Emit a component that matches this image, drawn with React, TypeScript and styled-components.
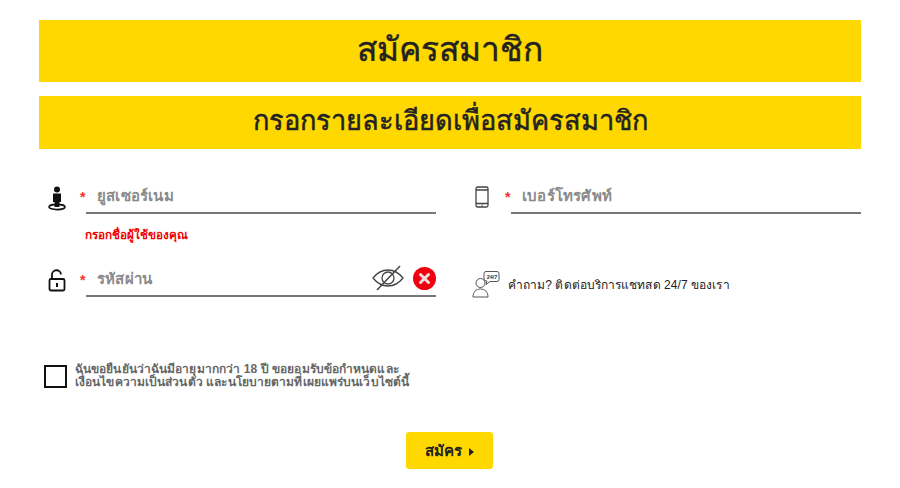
import React from "react";
import styled, { createGlobalStyle } from "styled-components";

const GlobalStyle = createGlobalStyle`
  html, body {
    margin: 0;
    padding: 0;
    background: #fff;
    font-family: "Liberation Sans", "Noto Sans", sans-serif;
  }
`;

const UserPinIcon = () => (
  <svg width="20" height="26" viewBox="0 0 20 26">
    <circle cx="10" cy="3.5" r="3" fill="#111" />
    <path d="M6 7.5h8v8.5h-1.5v5h-5v-5H6z" fill="#111" />
    <ellipse cx="10" cy="21" rx="8" ry="2.6" fill="none" stroke="#111" strokeWidth="1.6" />
  </svg>
);

const LockIcon = () => (
  <svg width="20" height="24" viewBox="0 0 20 24" fill="none" stroke="#111" strokeWidth="1.8">
    <path d="M5 10V6a4.500 4.500 0 0 1 9-.5" />
    <rect x="2.500" y="10" width="15" height="11.500" rx="1.500" />
    <rect x="9" y="14" width="2" height="4" fill="#111" stroke="none" />
  </svg>
);

const PhoneIcon = () => (
  <svg width="14" height="22" viewBox="0 0 14 22" fill="none" stroke="#444" strokeWidth="1.3">
    <rect x="1" y="1" width="12" height="20" rx="1.500" />
    <path d="M1 4h12M1 17.500h12" />
    <circle cx="7" cy="19.300" r=".7" fill="#444" stroke="none" />
  </svg>
);

const EyeOffIcon = () => (
  <svg width="32" height="26" viewBox="0 0 32 26" fill="none" stroke="#444" strokeWidth="1.3">
    <path d="M1 13c4-5 9-8 15-8s11 3 15 8c-4 5-9 8-15 8S5 18 1 13z" />
    <circle cx="16" cy="13" r="6" />
    <path d="M28 1L5 25" strokeWidth="1.500" />
  </svg>
);

const ClearIcon = () => (
  <svg width="23" height="23" viewBox="0 0 23 23">
    <circle cx="11.500" cy="11.500" r="11.500" fill="#f0000f" />
    <path d="M7.500 7.500l8 8M15.500 7.500l-8 8" stroke="#f3dfe0" strokeWidth="3" strokeLinecap="round" />
  </svg>
);

const ChatIcon = () => (
  <svg width="28" height="28" viewBox="0 0 28 28" fill="none" stroke="#555" strokeWidth="1">
    <circle cx="8.500" cy="13" r="4.500" />
    <path d="M1 27c0-5 3-8 7.500-8s7.500 3 7.500 8z" />
    <path d="M12 3.500a2 2 0 0 1 2-2h11a2 2 0 0 1 2 2v6a2 2 0 0 1-2 2h-7l-4 3 1-3.500a2.500 2.500 0 0 1-3-2z" />
    <text x="20" y="8.700" textAnchor="middle" fontSize="5.500" fontWeight="700" fill="#333" stroke="none">
      24/7
    </text>
  </svg>
);

const App: React.FC = () => {
  return (
    <Page>
      <GlobalStyle />
      <Title>สมัครสมาชิก</Title>
      <Subtitle>กรอกรายละเอียดเพื่อสมัครสมาชิก</Subtitle>

      <FormGrid>
        <Column>
          <Field>
            <IconSlot><UserPinIcon /></IconSlot>
            <Star>*</Star>
            <InputLine>
              <Placeholder>ยูสเซอร์เนม</Placeholder>
            </InputLine>
          </Field>
          <ErrorText>กรอกชื่อผู้ใช้ของคุณ</ErrorText>
          <Field>
            <IconSlot><LockIcon /></IconSlot>
            <Star>*</Star>
            <InputLine>
              <Placeholder>รหัสผ่าน</Placeholder>
              <Actions>
                <EyeOffIcon />
                <ClearIcon />
              </Actions>
            </InputLine>
          </Field>
        </Column>

        <Column>
          <Field>
            <IconSlot $width={24}><PhoneIcon /></IconSlot>
            <Star $gap={9}>*</Star>
            <InputLine>
              <Placeholder>เบอร์โทรศัพท์</Placeholder>
            </InputLine>
          </Field>
          <HelpRow>
            <ChatIcon />
            <HelpText>คำถาม? ติดต่อบริการแชทสด 24/7 ของเรา</HelpText>
          </HelpRow>
        </Column>
      </FormGrid>

      <TermsRow>
        <CheckBox />
        <TermsText>
          ฉันขอยืนยันว่าฉันมีอายุมากกว่า 18 ปี ขอยอมรับข้อกำหนดและ
          <br />
          เงื่อนไขความเป็นส่วนตัว และนโยบายตามที่เผยแพร่บนเว็บไซต์นี้
        </TermsText>
      </TermsRow>

      <ButtonRow>
        <SubmitButton type="button">
          สมัคร
          <Arrow />
        </SubmitButton>
      </ButtonRow>
    </Page>
  );
};

const Page = styled.div`
  box-sizing: border-box;
  width: 900px;
  height: 488px;
  padding: 20px 39px 0;
  overflow: hidden;
  color: #222;
`;

const Title = styled.h1`
  margin: 0;
  height: 62px;
  line-height: 59px;
  background: #ffd800;
  text-align: center;
  font-size: 33.400px;
  font-weight: 400;
  -webkit-text-stroke: 0.5px #222;
  color: #222;
`;

const Subtitle = styled.h2`
  margin: 14px 0 0;
  height: 53px;
  line-height: 49px;
  background: #ffd800;
  text-align: center;
  font-size: 27.200px;
  font-weight: 400;
  -webkit-text-stroke: 0.5px #222;
  color: #222;
`;

const FormGrid = styled.div`
  display: grid;
  grid-template-columns: 397px 389px;
  column-gap: 36px;
  margin-top: 30px;
`;

const Column = styled.div`
  display: flex;
  flex-direction: column;
`;

const Field = styled.div`
  display: flex;
  align-items: flex-start;
  height: 35px;
`;

const IconSlot = styled.div<{ $width?: number }>`
  flex: none;
  width: ${(p) => p.$width ?? 35}px;
  height: 35px;
  padding-top: 7px;
  padding-left: ${(p) => (p.$width ? 3 : 8)}px;
  box-sizing: border-box;
`;

const Star = styled.span<{ $gap?: number }>`
  flex: none;
  width: 6px;
  margin-left: ${(p) => p.$gap ?? 6}px;
  padding-top: 9px;
  color: #f03030;
  font-size: 14px;
  font-weight: 700;
  line-height: 18px;
`;

const InputLine = styled.div`
  flex: 1;
  display: flex;
  align-items: flex-start;
  justify-content: space-between;
  height: 35px;
  box-sizing: border-box;
  padding-left: 11px;
  border-bottom: 2px solid #777;
`;

const Placeholder = styled.span`
  padding-top: 7px;
  font-size: 15px;
  font-weight: 700;
  line-height: 20px;
  letter-spacing: 0.2px;
  color: #8a8a8a;
`;

const Actions = styled.div`
  display: flex;
  align-items: center;
  gap: 9px;
  height: 30px;
  padding-top: 1px;
`;

const ErrorText = styled.div`
  height: 48px;
  padding: 13px 0 0 46px;
  box-sizing: border-box;
  font-size: 11.700px;
  font-weight: 700;
  line-height: 16px;
  color: #f00000;
`;

const HelpRow = styled.div`
  display: flex;
  align-items: center;
  gap: 8px;
  margin-top: 56px;
`;

const HelpText = styled.span`
  font-size: 12px;
  letter-spacing: 0.08px;
  color: #222;
`;

const TermsRow = styled.div`
  display: flex;
  align-items: center;
  gap: 8px;
  margin-top: 65px;
  padding-left: 5px;
`;

const CheckBox = styled.div`
  flex: none;
  width: 23px;
  height: 23px;
  box-sizing: border-box;
  border: 2px solid #111;
`;

const TermsText = styled.p`
  margin: 0;
  font-size: 12px;
  font-weight: 700;
  line-height: 13px;
  letter-spacing: 0.1px;
  color: #666;
`;

const ButtonRow = styled.div`
  display: flex;
  justify-content: center;
  margin-top: 43px;
  padding-right: 1px;
`;

const SubmitButton = styled.button`
  display: flex;
  align-items: center;
  justify-content: center;
  gap: 7px;
  width: 87px;
  height: 37px;
  padding: 0;
  border: 0;
  border-radius: 3px;
  background: #ffd800;
  color: #222;
  font-family: inherit;
  font-size: 15px;
  font-weight: 700;
`;

const Arrow = styled.span`
  width: 0;
  height: 0;
  margin-top: 3px;
  border-left: 5px solid #222;
  border-top: 4px solid transparent;
  border-bottom: 4px solid transparent;
`;

export default App;
